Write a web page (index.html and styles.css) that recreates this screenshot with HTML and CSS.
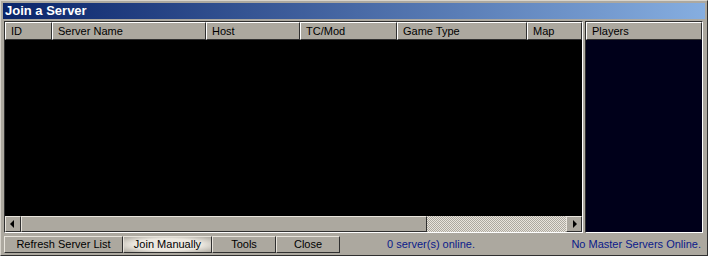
FILE: index.html
```html
<!DOCTYPE html>
<html lang="en">
<head>
    <meta charset="UTF-8">
    <title>Join a Server</title>
    <link rel="stylesheet" href="styles.css">
</head>
<body>
    <div class="window">
        <div class="titlebar">Join a Server</div>
        <div class="main">
            <div class="server-list">
                <div class="header-row">
                    <div class="col" style="width:47px">ID</div>
                    <div class="col" style="width:154px">Server Name</div>
                    <div class="col" style="width:94px">Host</div>
                    <div class="col" style="width:97px">TC/Mod</div>
                    <div class="col" style="width:130px">Game Type</div>
                    <div class="col col-last">Map</div>
                </div>
                <div class="list-body"></div>
                <div class="hscroll">
                    <div class="arrow-btn">
                        <svg width="16" height="16" viewBox="0 0 16 16"><path d="M9 4 L5 8 L9 12 Z" fill="#000"/></svg>
                    </div>
                    <div class="thumb"></div>
                    <div class="track"></div>
                    <div class="arrow-btn">
                        <svg width="16" height="16" viewBox="0 0 16 16"><path d="M7 4 L11 8 L7 12 Z" fill="#000"/></svg>
                    </div>
                </div>
            </div>
            <div class="players">
                <div class="header-row">
                    <div class="col col-last">Players</div>
                </div>
                <div class="players-body"></div>
            </div>
        </div>
        <div class="bottom-bar">
            <div class="buttons">
                <div class="btn" style="width:119px">Refresh Server List</div>
                <div class="btn btn-hover" style="width:89px">Join Manually</div>
                <div class="btn" style="width:64px">Tools</div>
                <div class="btn" style="width:64px">Close</div>
            </div>
            <div class="status">0 server(s) online.</div>
            <div class="status status-right">No Master Servers Online.</div>
        </div>
    </div>
</body>
</html>
```

FILE: styles.css
```css
/* Ventana estilo Windows clásico */
body {
    margin: 0;
    font-family: "Liberation Sans", Arial, sans-serif;
    font-size: 11px;
    background: #aca89f;
}
.window {
    width: 708px;
    height: 256px;
    box-sizing: border-box;
    background: #aca89f;
    border: 1px solid;
    border-color: #d8d4cc #303030 #303030 #d8d4cc;
    padding: 2px;
    display: flex;
    flex-direction: column;
}
.titlebar {
    height: 16px;
    line-height: 16px;
    padding-left: 2px;
    color: #ffffff;
    font-weight: bold;
    font-size: 13px;
    background: linear-gradient(to right, #0a246a, #86aee0);
}
.main {
    display: flex;
    gap: 2px;
    margin: 2px 0 0 1px;
    height: 212px;
}
.server-list {
    width: 579px;
    box-sizing: border-box;
    border: 1px solid;
    border-color: #303030 #ffffff #ffffff #303030;
    display: flex;
    flex-direction: column;
    background: #000000;
}
.header-row {
    display: flex;
    height: 18px;
    background: #aca89f;
}
.col {
    box-sizing: border-box;
    height: 18px;
    line-height: 16px;
    padding-left: 5px;
    color: #000000;
    border: 1px solid;
    border-color: #ffffff #303030 #303030 #ffffff;
    white-space: nowrap;
    overflow: hidden;
}
.col-last {
    flex: 1;
}
.list-body {
    flex: 1;
    background: #000000;
}
.hscroll {
    display: flex;
    height: 16px;
    background: #aca89f;
}
.arrow-btn, .thumb {
    box-sizing: border-box;
    height: 16px;
    border: 1px solid;
    border-color: #e8e4dc #303030 #303030 #e8e4dc;
    background: #aca89f;
}
.arrow-btn {
    width: 16px;
}
.arrow-btn svg {
    display: block;
    margin: -1px;
}
.thumb {
    width: 406px;
}
.track {
    flex: 1;
    background-color: #d8d4cc;
    background-image: repeating-conic-gradient(#aca89f 0 25%, #e8e4dc 0 50%);
    background-size: 2px 2px;
}
.players {
    flex: 1;
    box-sizing: border-box;
    border: 1px solid;
    border-color: #303030 #ffffff #ffffff #303030;
    margin-right: 2px;
    display: flex;
    flex-direction: column;
}
.players-body {
    flex: 1;
    background: #00001a;
}
.bottom-bar {
    display: flex;
    align-items: center;
    margin: 2px 0 0 1px;
    height: 18px;
}
.buttons {
    display: flex;
}
.btn {
    box-sizing: border-box;
    height: 17px;
    line-height: 15px;
    text-align: center;
    border: 1px solid;
    border-color: #e8e4dc #303030 #303030 #e8e4dc;
    color: #000000;
}
.btn-hover {
    background: radial-gradient(ellipse at center, #ece8e0 55%, #aca89f 100%);
}
.status {
    color: #0a1a8a;
    margin-left: 47px;
}
.status-right {
    margin-left: auto;
    margin-right: 4px;
}
```
